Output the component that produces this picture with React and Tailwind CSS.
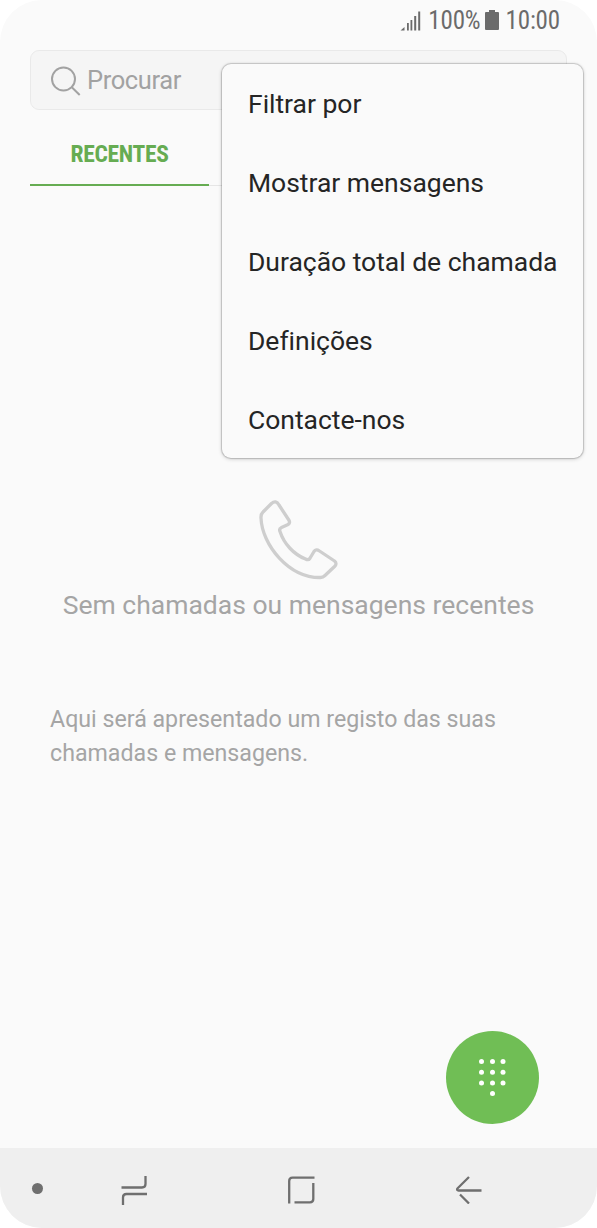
import React, { useState } from "react";

const menuItems = [
  "Filtrar por",
  "Mostrar mensagens",
  "Duração total de chamada",
  "Definições",
  "Contacte-nos",
];

function StatusBar() {
  return (
    <div className="h-[50px] shrink-0 pr-[37px] flex items-start justify-end text-[#6b6b6b]">
      <div className="h-[41px] flex items-center text-[25px] tracking-[-0.15px] leading-none font-stretch-condensed whitespace-nowrap">
        <svg width="21" height="20" viewBox="0 0 21 20" className="mr-[7px]" fill="currentColor">
          <path d="M.5 19.500L4.500 16v3.500zM7 12h1.800v7.500H7zM10.500 9h1.800v10.500h-1.800zM14.200 5h2v14.500h-2zM18.200 .5h2v19h-2z" />
        </svg>
        <span>100%</span>
        <svg width="14" height="20" viewBox="0 0 14 20" className="ml-[4px] mr-[7px] -mt-px" fill="currentColor">
          <path d="M4 0h6v2h3a1 1 0 0 1 1 1v16a1 1 0 0 1-1 1H1a1 1 0 0 1-1-1V3a1 1 0 0 1 1-1h3z" />
        </svg>
        <span>10:00</span>
      </div>
    </div>
  );
}

function SearchBox() {
  return (
    <div className="mx-[30px] h-[60px] shrink-0 flex items-center rounded-[9px] border border-[#e9e9e9] bg-[#f5f5f5] pl-[19px] text-[#a2a2a2]">
      <svg width="32" height="32" viewBox="0 0 32 32" className="mt-px" fill="none" stroke="currentColor" strokeWidth="2">
        <circle cx="13.500" cy="14" r="11.500" />
        <path d="M21.800 22.200L29.700 30" />
      </svg>
      <span className="ml-[5px] pt-px text-[25.5px] tracking-[-0.4px]">Procurar</span>
    </div>
  );
}

function Tabs() {
  return (
    <div className="mx-[30px] h-[76px] shrink-0 flex">
      <div className="w-[179px] flex items-center justify-center border-b-2 border-[#66ac52] pt-[15px] text-[23.5px] tracking-[-0.3px] font-bold font-stretch-condensed text-[#66ac52]">
        <span>RECENTES</span>
      </div>
      <div className="flex-1 border-b border-[#e6e6e6]" />
    </div>
  );
}

function EmptyState() {
  return (
    <div className="pt-[314px] flex flex-col text-[#a5a5a5]">
      <svg width="80" height="80" viewBox="0 0 80 80" className="ml-[259px]" fill="none" stroke="#cecece" strokeWidth="3.300" strokeLinejoin="round">
        <path d="M12.500 3.500L4 12Q1.800 14 2 18C3 45 30 78 61.500 77.500Q64 77.500 66 75.500L75.500 66.500Q78.500 63.500 75.500 61L60.500 51Q57 48.500 55 51.500L50.800 58.500Q49.500 60.500 46.500 59C35 54.500 25 44 21 31.500Q19.800 28.800 22.500 27.500L28.500 24.800Q31.800 23 29.800 20L20 5Q17-.5 12.500 3.500Z" />
      </svg>
      <p className="mt-[5px] text-center text-[26.5px] leading-[40px]">Sem chamadas ou mensagens recentes</p>
      <p className="mt-[77px] ml-[50px] w-[470px] text-[23.2px] leading-[34px]">
        Aqui será apresentado um registo das suas chamadas e mensagens.
      </p>
    </div>
  );
}

function OptionsMenu() {
  return (
    <ul className="absolute left-[222px] top-[64px] w-[361px] h-[394px] rounded-[9px] bg-[#fafafa] shadow-[0_0_1px_1px_rgba(0,0,0,0.17),0_1px_4px_rgba(0,0,0,0.2)]">
      {menuItems.map((item) => (
        <li key={item} className="h-[79px] flex items-center pl-[26px] text-[26.5px] tracking-[-0.02px] text-[#252525] whitespace-nowrap">
          {item}
        </li>
      ))}
    </ul>
  );
}

function DialButton() {
  const dots = [
    [4, 4], [15, 4], [25.5, 4],
    [4, 14.700], [15, 14.700], [25.5, 14.700],
    [4, 25.5], [15, 25.5], [25.5, 25.5],
    [15, 36],
  ];
  return (
    <button className="absolute left-[446px] top-[1031px] size-[93px] rounded-full bg-[#70be55]">
      <svg width="93" height="93" viewBox="-31.500 -26.500 93 93" fill="white">
        {dots.map(([x, y]) => (
          <circle key={`${x}-${y}`} cx={x} cy={y} r="2.500" />
        ))}
      </svg>
    </button>
  );
}

function NavBar() {
  return (
    <div className="mt-auto h-[80px] shrink-0 flex items-center bg-[#efefef] pt-[2px] pl-[32px] text-[#6f6f6f]">
      <span className="-mt-[1px] size-[11px] rounded-full bg-[#6f6f6f]" />
      <svg width="28" height="30" viewBox="0 0 28 30" className="ml-[78px] mt-px" fill="none" stroke="currentColor" strokeWidth="2.300">
        <path d="M.5 12.500H21Q24.500 12.500 24.500 9V1M26 19H5.500Q2 19 2 22.500V30" />
      </svg>
      <svg width="28" height="28" viewBox="0 0 28 28" className="ml-[138px] mt-px" fill="none" stroke="currentColor" strokeWidth="2.300">
        <path d="M2.200 27.500V5Q2.200 1.600 5.500 1.600H27.500M26.300 7V23Q26.300 26.300 23 26.300H7.500" />
      </svg>
      <svg width="28" height="28" viewBox="0 0 28 28" className="ml-[140px] mt-px" fill="none" stroke="currentColor" strokeWidth="2.300" strokeLinejoin="round">
        <path d="M14 1L2.400 12.500Q1.500 14.500 3.500 14.500H26.500M5 18.500L14 27.500" />
      </svg>
    </div>
  );
}

function App() {
  const [menuOpen] = useState(true);

  return (
    <div className="w-[597px] h-[1228px] bg-white">
      <div className="relative h-full flex flex-col overflow-hidden rounded-[42px] bg-[#fafafa] font-[Roboto,sans-serif]">
        <StatusBar />
        <SearchBox />
        <Tabs />
        <EmptyState />
        <NavBar />
        <DialButton />
        {menuOpen && <OptionsMenu />}
      </div>
    </div>
  );
}

export default App;
